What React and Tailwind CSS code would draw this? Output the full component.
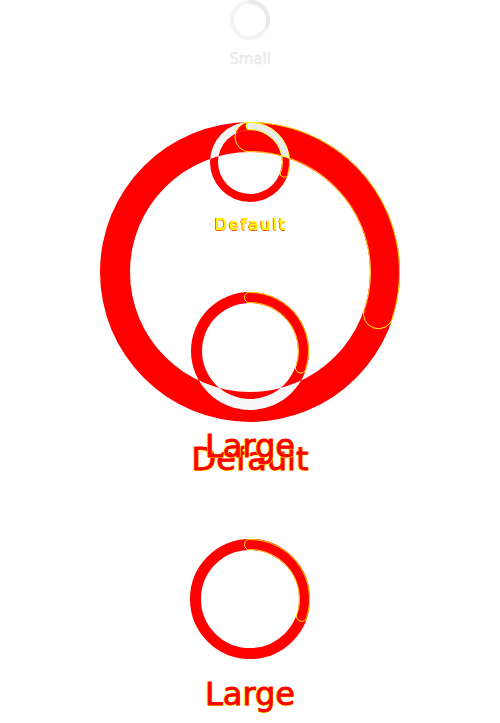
import React from "react";

// geometry of the rings, in page coordinates
const BIG = { cx: 250, cy: 272, r: 135, w: 30 };
const MED = { cx: 250, cy: 162, r: 36, w: 8 };
const LRG = { cx: 250, cy: 351, r: 53.5, w: 11 };
const END = 18;

const YEL = "#ffff00";
const RED = "#ff0000";

function pt(c, r, deg) {
  const a = (deg * Math.PI) / 180;
  return [c.cx + r * Math.cos(a), c.cy + r * Math.sin(a)];
}

function circle(cx, cy, r) {
  return `M ${cx - r} ${cy} a ${r} ${r} 0 1 0 ${2 * r} 0 a ${r} ${r} 0 1 0 ${-2 * r} 0 Z`;
}

function band(c) {
  return circle(c.cx, c.cy, c.r + c.w / 2) + " " + circle(c.cx, c.cy, c.r - c.w / 2);
}

function arc(c, r, a0, a1) {
  const [x0, y0] = pt(c, r, a0);
  const [x1, y1] = pt(c, r, a1);
  const large = a1 - a0 > 180 ? 1 : 0;
  return `M ${x0} ${y0} A ${r} ${r} 0 ${large} 1 ${x1} ${y1}`;
}

function endCap(c, deg) {
  const [xi, yi] = pt(c, c.r - c.w / 2, deg);
  const [xo, yo] = pt(c, c.r + c.w / 2, deg);
  return `M ${xi} ${yi} A ${c.w / 2} ${c.w / 2} 0 0 0 ${xo} ${yo}`;
}

function startCap(c, deg) {
  const [xi, yi] = pt(c, c.r - c.w / 2, deg);
  const [xo, yo] = pt(c, c.r + c.w / 2, deg);
  return `M ${xo} ${yo} A ${c.w / 2} ${c.w / 2} 0 0 0 ${xi} ${yi}`;
}

// yellow edges that the arc part of a ring leaves
function ArcEdges({ c }) {
  return (
    <g fill="none" stroke={YEL} strokeWidth="1">
      <path d={arc(c, c.r + c.w / 2 - 0.5, -90, END)} opacity="0.8" />
      <path d={arc(c, c.r - c.w / 2 + 0.5, -90, END)} opacity="0.8" />
      <path d={startCap(c, -90)} />
      <path d={endCap(c, END)} />
    </g>
  );
}

function SmallSpinner() {
  const c = { cx: 20, cy: 20, r: 18, w: 4 };
  return (
    <svg width="40" height="40" viewBox="0 0 40 40" className="block">
      <circle cx="20" cy="20" r="18" fill="none" stroke="#f3f3f3" strokeWidth="4" />
      <path d={arc(c, 18, -90, END)} fill="none" stroke="#e9e9e9" strokeWidth="4" strokeLinecap="round" />
    </svg>
  );
}

function Overlap() {
  return (
    <svg width="300" height="300" viewBox="100 122 300 300" className="block">
      <defs>
        <clipPath id="medBand">
          <path d={band(MED)} clipRule="evenodd" />
        </clipPath>
      </defs>

      {/* parts that are the same in both */}
      <circle cx={MED.cx} cy={MED.cy} r={MED.r} fill="none" stroke="#f6f6f6" strokeWidth={MED.w} />
      <path d={arc(MED, MED.r, -90, END)} fill="none" stroke="#ececec" strokeWidth={MED.w} />
      <circle cx={LRG.cx} cy={LRG.cy} r={LRG.r} fill="none" stroke="#f8f8f8" strokeWidth={LRG.w} />

      {/* parts that differ */}
      <path d={[band(BIG), band(MED), band(LRG)].join(" ")} fill={RED} fillRule="evenodd" />
      <path d="M 250 122 A 15 15 0 0 0 250 152 Z" fill={RED} clipPath="url(#medBand)" />
      <path d="M 250 122 A 4 4 0 0 0 250 130 Z" fill="#ececec" />

      <ArcEdges c={BIG} />
      <ArcEdges c={MED} />
      <ArcEdges c={LRG} />
    </svg>
  );
}

function BottomRing() {
  const c = { cx: 60, cy: 60, r: 54.5, w: 11 };
  return (
    <svg width="120" height="120" viewBox="0 0 120 120" className="block">
      <circle cx="60" cy="60" r={c.r} fill="none" stroke={RED} strokeWidth={c.w} />
      <ArcEdges c={c} />
    </svg>
  );
}

const redText =
  "text-[#ff0000] [-webkit-text-stroke:0.8px_#ff0000] [text-shadow:1px_0_0_#ff0,0_1px_0_#ff0,-1px_0_0_#ff0]";

export default function App() {
  return (
    <div className="relative min-h-[723px] bg-white flex flex-col items-center font-['DejaVu_Sans',sans-serif]">
      <SmallSpinner />
      <p className="mt-[9px] text-[15px] leading-5 text-[#ebebeb] [-webkit-text-stroke:0.6px_#ebebeb]">Small</p>

      <div className="mt-[53px]">
        <Overlap />
      </div>
      <p className={`mt-[17px] text-[32px] leading-10 ${redText}`}>Default</p>

      <div className="mt-[60px]">
        <BottomRing />
      </div>
      <p className={`mt-[15px] text-[32px] leading-10 ${redText}`}>Large</p>

      <p className="absolute top-[215px] inset-x-0 pl-[2px] text-center text-[16px] leading-5 tracking-[2px] text-[#ffff00] [-webkit-text-stroke:0.7px_#ffff00] [text-shadow:-1px_0_0_#f00,0_1px_0_#f00]">
        Default
      </p>
      <p className={`absolute top-[426px] inset-x-0 text-center text-[32px] leading-10 ${redText}`}>Large</p>
    </div>
  );
}
